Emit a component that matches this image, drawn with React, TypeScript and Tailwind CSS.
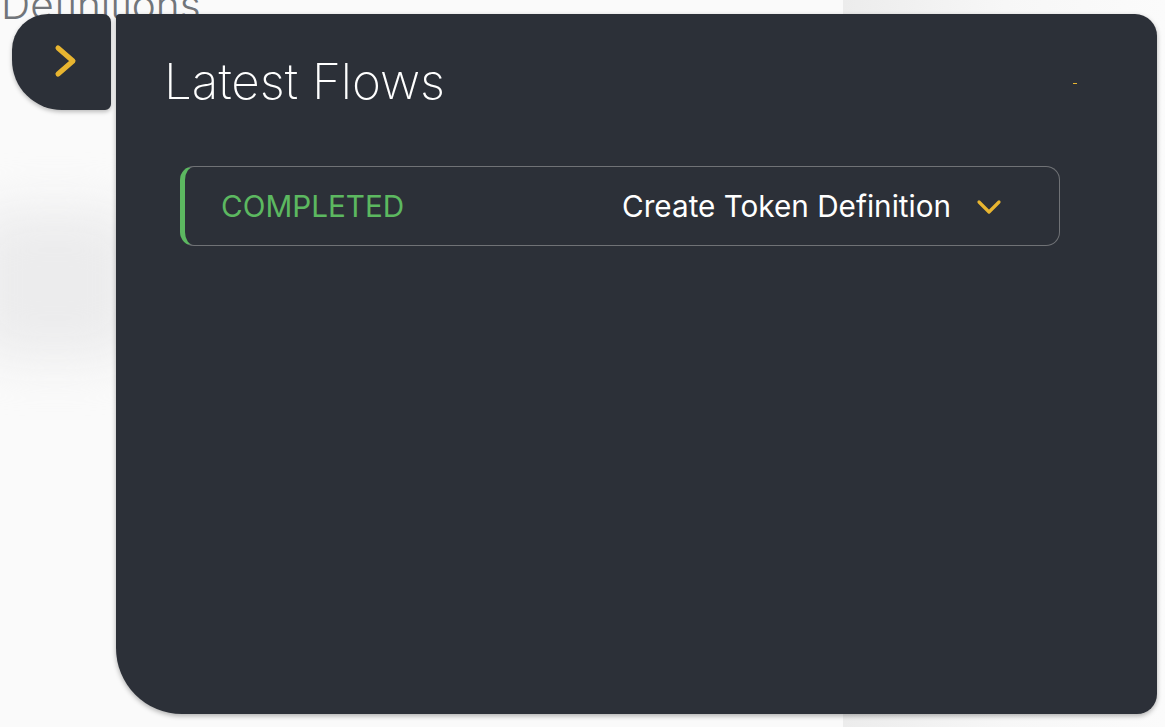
export default function App() {
  return (
    <div className="relative h-[727px] w-[1165px] overflow-hidden bg-[#fafafa] font-['Inter',sans-serif]">
      {/* page behind the drawer */}
      <div className="flex h-full">
        <div className="w-[843px]">
          <h1 className="-mt-[19px] pl-[1px] text-[40.5px] font-light leading-[48px] text-[#71757a]">Definitions</h1>
          <div className="ml-[-30px] mt-[180px] h-[150px] w-[170px] rounded-[40px] bg-[#ececed] blur-[24px]" />
        </div>
        <div className="flex-1 bg-gradient-to-r from-[#ececec] via-[#f7f7f7] to-[#fbfbfb]" />
      </div>

      {/* toggle tab */}
      <button className="absolute left-[12px] top-[14px] flex h-[96px] w-[99px] items-center justify-center rounded-tl-[36px] rounded-tr-[8px] rounded-br-[6px] rounded-bl-[50px] bg-[#2c3038] shadow-[0_2px_4px_rgba(0,0,0,0.25)]">
        <svg width="24" height="36" viewBox="0 0 24 36" className="-mt-[2px] ml-[9px]">
          <path d="M4 5 L19 18 L4 31" fill="none" stroke="#e8b530" strokeWidth="5" strokeLinecap="round" strokeLinejoin="round" />
        </svg>
      </button>

      {/* drawer */}
      <div className="absolute left-[116px] top-[14px] h-[700px] w-[1041px] rounded-tl-[4px] rounded-tr-[22px] rounded-br-[20px] rounded-bl-[66px] bg-[#2c3038] shadow-[0_2px_5px_rgba(0,0,0,0.3)]">
        <div className="flex items-center justify-between pl-[48px] pr-[80px] pt-[38px]">
          <h2 className="text-[49.4px] font-extralight leading-[58px] text-white">Latest Flows</h2>
          <span className="mt-[4px] h-[1px] w-[4px] bg-[#e8b530]" />
        </div>
        <div className="ml-[64px] mt-[56px] flex h-[80px] w-[880px] items-center rounded-[14px] border border-l-[5px] border-[#707276] border-l-[#5cb860] pt-[2px]">
          <span className="w-[437px] pl-[36px] text-[29.7px] leading-none text-[#5cb860]">COMPLETED</span>
          <span className="text-[29.7px] leading-none text-white">Create Token Definition</span>
          <svg width="26" height="18" viewBox="0 0 26 18" className="ml-[25px]">
            <path d="M3 4 L13 14 L23 4" fill="none" stroke="#e8b530" strokeWidth="3.2" strokeLinecap="round" strokeLinejoin="round" />
          </svg>
        </div>
      </div>
    </div>
  );
}
